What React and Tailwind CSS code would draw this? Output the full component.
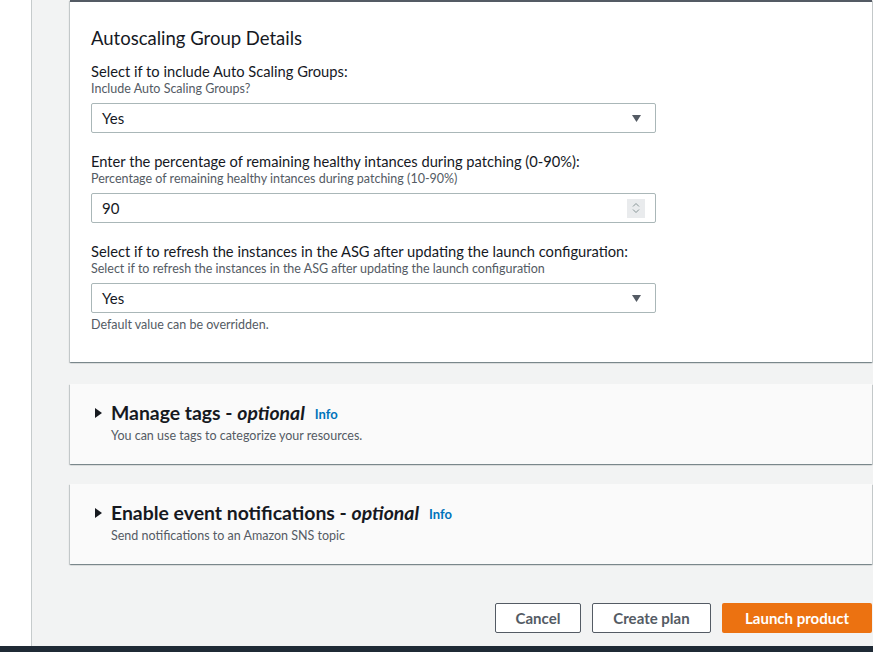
import React from "react";

const font = { fontFamily: '"Lato", "Liberation Sans", sans-serif' };

const Caret = () => (
  <svg width="9" height="7" viewBox="0 0 9 7" className="fill-[#545b64]">
    <path d="M0 0h9L4.5 7z" />
  </svg>
);

const Field = ({ label, hint, children }) => (
  <div className="flex flex-col">
    <div className="text-[14.7px] leading-[19px] text-[#16191f]">{label}</div>
    <div className="text-[12.5px] leading-[16px] text-[#545b64]">{hint}</div>
    <div className="mt-[6px]">{children}</div>
  </div>
);

const SelectBox = ({ value }) => (
  <div className="flex h-[30px] w-[565px] items-center justify-between rounded-[2px] border border-[#aab7b8] bg-white pl-[10px] pr-[14px] text-[15px] text-[#16191f]">
    <span>{value}</span>
    <Caret />
  </div>
);

const NumberBox = ({ value }) => (
  <div className="flex h-[30px] w-[565px] items-center justify-between rounded-[2px] border border-[#aab7b8] bg-white pl-[10px] pr-[10px] text-[15px] text-[#16191f]">
    <span>{value}</span>
    <div className="flex h-[19px] w-[18px] flex-col items-center justify-center gap-[2px] bg-[#e9ebed]">
      <svg width="8" height="5" viewBox="0 0 8 5" fill="none" stroke="#879596" strokeWidth="1">
        <path d="M1 4.5L4 1.5l3 3" />
      </svg>
      <svg width="8" height="5" viewBox="0 0 8 5" fill="none" stroke="#879596" strokeWidth="1">
        <path d="M1 0.5l3 3 3-3" />
      </svg>
    </div>
  </div>
);

const Collapsed = ({ title, desc }) => (
  <div className="h-[80px] bg-[#fafafa] pl-[25px] pt-[17px] shadow-[0_1px_1px_0_rgba(0,28,36,0.3),1px_1px_1px_0_rgba(0,28,36,0.15),-1px_1px_1px_0_rgba(0,28,36,0.15)]">
    <div className="flex items-center">
      <svg width="7" height="10" viewBox="0 0 7 10" className="mr-[9px] fill-[#16191f]">
        <path d="M0 0l7 5-7 5z" />
      </svg>
      <span className="text-[19.4px] font-bold leading-[24px] text-[#16191f]">
        {title} - <i>optional</i>
      </span>
      <span className="ml-[10px] mt-[3px] text-[13px] font-bold text-[#0073bb]">Info</span>
    </div>
    <div className="ml-[16px] mt-[3px] text-[12.5px] leading-[16px] text-[#545b64]">{desc}</div>
  </div>
);

export default function App() {
  return (
    <div className="flex h-[652px] w-[873px] flex-col overflow-hidden" style={font}>
      <div className="flex min-h-0 flex-1">
        <div className="w-[31px] bg-white" />
        <div className="flex-1 border-l border-[#c6cbcc] bg-[#f2f3f3] pl-[38px] pr-[1px]">
          <div className="border-t-2 border-[#545b64] bg-white pb-[29px] pl-[21px] pt-[25px] shadow-[0_1px_1px_0_rgba(0,28,36,0.3),1px_1px_1px_0_rgba(0,28,36,0.15),-1px_1px_1px_0_rgba(0,28,36,0.15)]">
            <h2 className="text-[18.5px] leading-[22px] text-[#16191f]">Autoscaling Group Details</h2>
            <div className="mt-[13px] flex flex-col gap-[19px]">
              <Field label="Select if to include Auto Scaling Groups:" hint="Include Auto Scaling Groups?">
                <SelectBox value="Yes" />
              </Field>
              <Field
                label="Enter the percentage of remaining healthy intances during patching (0-90%):"
                hint="Percentage of remaining healthy intances during patching (10-90%)"
              >
                <NumberBox value="90" />
              </Field>
              <Field
                label="Select if to refresh the instances in the ASG after updating the launch configuration:"
                hint="Select if to refresh the instances in the ASG after updating the launch configuration"
              >
                <SelectBox value="Yes" />
              </Field>
            </div>
            <div className="mt-[4px] text-[12.5px] leading-[16px] text-[#545b64]">Default value can be overridden.</div>
          </div>

          <div className="mt-[22px] flex flex-col gap-[20px]">
            <Collapsed title="Manage tags" desc="You can use tags to categorize your resources." />
            <Collapsed title="Enable event notifications" desc="Send notifications to an Amazon SNS topic" />
          </div>

          <div className="mt-[39px] flex justify-end gap-[11px]">
            <button className="h-[30px] w-[86px] rounded-[2px] border border-[#545b64] bg-white text-[15px] font-bold text-[#545b64]">
              Cancel
            </button>
            <button className="h-[30px] w-[119px] rounded-[2px] border border-[#545b64] bg-white text-[15px] font-bold text-[#545b64]">
              Create plan
            </button>
            <button className="h-[30px] w-[150px] rounded-[2px] bg-[#ec7211] text-[15px] font-bold text-white">
              Launch product
            </button>
          </div>
        </div>
      </div>
      <div className="h-[6px] bg-[#1f2a35]" />
    </div>
  );
}
